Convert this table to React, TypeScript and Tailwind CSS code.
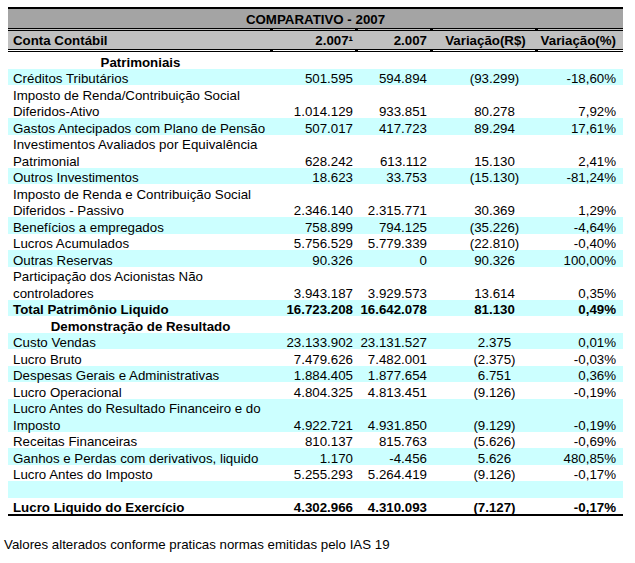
import React from 'react';

type Row = {
  label?: string | [string, string];
  a?: string;
  b?: string;
  c?: string;
  d?: string;
  fill?: boolean;
  bold?: boolean;
  section?: boolean;
};

const rows: Row[] = [
  { label: 'Patrimoniais', section: true },
  { label: 'Créditos Tributários', a: '501.595', b: '594.894', c: '(93.299)', d: '-18,60%', fill: true },
  { label: ['Imposto de Renda/Contribuição Social', 'Diferidos-Ativo'], a: '1.014.129', b: '933.851', c: '80.278', d: '7,92%' },
  { label: 'Gastos Antecipados com Plano de Pensão', a: '507.017', b: '417.723', c: '89.294', d: '17,61%', fill: true },
  { label: ['Investimentos Avaliados por Equivalência', 'Patrimonial'], a: '628.242', b: '613.112', c: '15.130', d: '2,41%' },
  { label: 'Outros Investimentos', a: '18.623', b: '33.753', c: '(15.130)', d: '-81,24%', fill: true },
  { label: ['Imposto de Renda e Contribuição Social', 'Diferidos - Passivo'], a: '2.346.140', b: '2.315.771', c: '30.369', d: '1,29%' },
  { label: 'Benefícios a empregados', a: '758.899', b: '794.125', c: '(35.226)', d: '-4,64%', fill: true },
  { label: 'Lucros Acumulados', a: '5.756.529', b: '5.779.339', c: '(22.810)', d: '-0,40%' },
  { label: 'Outras Reservas', a: '90.326', b: '0', c: '90.326', d: '100,00%', fill: true },
  { label: ['Participação dos Acionistas Não', 'controladores'], a: '3.943.187', b: '3.929.573', c: '13.614', d: '0,35%' },
  { label: 'Total Patrimônio Liquido', a: '16.723.208', b: '16.642.078', c: '81.130', d: '0,49%', fill: true, bold: true },
  { label: 'Demonstração de Resultado', section: true },
  { label: 'Custo Vendas', a: '23.133.902', b: '23.131.527', c: '2.375', d: '0,01%', fill: true },
  { label: 'Lucro Bruto', a: '7.479.626', b: '7.482.001', c: '(2.375)', d: '-0,03%' },
  { label: 'Despesas Gerais e Administrativas', a: '1.884.405', b: '1.877.654', c: '6.751', d: '0,36%', fill: true },
  { label: 'Lucro Operacional', a: '4.804.325', b: '4.813.451', c: '(9.126)', d: '-0,19%' },
  { label: ['Lucro Antes do Resultado Financeiro e do', 'Imposto'], a: '4.922.721', b: '4.931.850', c: '(9.129)', d: '-0,19%', fill: true },
  { label: 'Receitas Financeiras', a: '810.137', b: '815.763', c: '(5.626)', d: '-0,69%' },
  { label: 'Ganhos e Perdas com derivativos, liquido', a: '1.170', b: '-4.456', c: '5.626', d: '480,85%', fill: true },
  { label: 'Lucro Antes do Imposto', a: '5.255.293', b: '5.264.419', c: '(9.126)', d: '-0,17%' },
  { fill: true },
  { label: 'Lucro Liquido do Exercício', a: '4.302.966', b: '4.310.093', c: '(7.127)', d: '-0,17%', bold: true },
];

const cols = 'grid grid-cols-[265px_85px_75px_105px_85px]';

function DoubleRule({ middle }: { middle: string }) {
  return (
    <div className={cols}>
      {[0, 1, 2, 3, 4].map((i) => (
        <div key={i} className={`h-[3px] border-y border-black ${middle} ${i < 4 ? 'border-r-[3px] border-r-black' : ''}`} />
      ))}
    </div>
  );
}

function BodyRow({ row }: { row: Row }) {
  const two = Array.isArray(row.label);
  const h = two ? 'h-[33px]' : 'h-[16.5px]';
  const bg = row.fill ? 'bg-[#ccffff]' : 'bg-white';
  const weight = row.bold || row.section ? 'font-bold' : '';
  const cell = `flex items-end leading-[13px] ${h}`;

  if (row.section) {
    return (
      <div className={`${cols} ${bg} ${weight}`}>
        <div className={`${cell} justify-center`}>{row.label}</div>
        <div /><div /><div /><div />
      </div>
    );
  }

  return (
    <div className={`${cols} ${bg} ${weight}`}>
      <div className={`${cell} pl-[5px]`}>
        {two ? (
          <div className="flex flex-col">
            <span className="h-[16.5px]">{(row.label as string[])[0]}</span>
            <span>{(row.label as string[])[1]}</span>
          </div>
        ) : (
          row.label
        )}
      </div>
      <div className={`${cell} justify-end pr-[5px]`}>{row.a}</div>
      <div className={`${cell} justify-end pr-[6px]`}>{row.b}</div>
      <div className={`${cell} justify-center pl-[18px]`}>{row.c}</div>
      <div className={`${cell} justify-end pr-[7px]`}>{row.d}</div>
    </div>
  );
}

export default function App() {
  return (
    <div className="w-[635px] h-[563px] bg-white text-black text-[13.3px] font-['Liberation_Sans',Arial,sans-serif] overflow-hidden">
      <div className="ml-[8px] pt-[7px] w-[615px]">
        <div className="h-[2px] bg-black" />
        <div className="h-[19px] bg-[#a4a4a4] flex items-end justify-center pb-[1px] leading-[15px] font-bold">
          COMPARATIVO - 2007
        </div>
        <DoubleRule middle="bg-[#c0c0c0]" />
        <div className={`${cols} h-[18px] bg-[#c0c0c0] font-bold leading-[15px]`}>
          <div className="flex items-end pl-[5px] pb-[1px]">Conta Contábil</div>
          <div className="flex items-end justify-end pr-[5px] pb-[1px]">2.007¹</div>
          <div className="flex items-end justify-end pr-[6px] pb-[1px]">2.007</div>
          <div className="flex items-end justify-center pb-[1px]">Variação(R$)</div>
          <div className="flex items-end justify-end pr-[7px] pb-[1px]">Variação(%)</div>
        </div>
        <DoubleRule middle="bg-white" />
        {rows.map((r, i) => (
          <BodyRow key={i} row={r} />
        ))}
        <div className="h-[2px] bg-black" />
      </div>
      <p className="pl-[4px] mt-[21px] leading-[16px]">Valores alterados conforme praticas normas emitidas pelo IAS 19</p>
    </div>
  );
}
